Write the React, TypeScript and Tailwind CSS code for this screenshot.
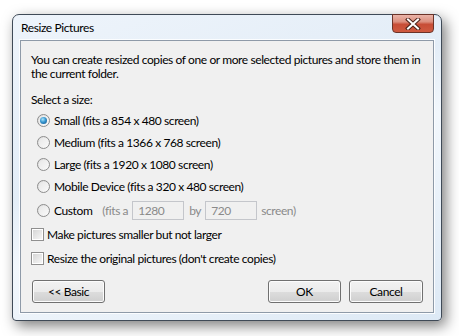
import React from "react";

const font = { fontFamily: 'Lato, "Liberation Sans", sans-serif', letterSpacing: "-0.4px" };

function Radio({ checked }: { checked?: boolean }) {
  return (
    <span className="relative w-[13px] h-[13px] rounded-full border border-[#8d8d8d] bg-gradient-to-br from-[#dcdcdc] to-[#fdfdfd] flex items-center justify-center shrink-0">
      <span className="w-[9px] h-[9px] rounded-full bg-gradient-to-br from-[#e8e8e8] to-[#f8f8f8] flex items-center justify-center">
        {checked && (
          <span className="w-[7px] h-[7px] rounded-full bg-[radial-gradient(circle_at_40%_35%,#a9e4fb_0%,#3796cf_45%,#0d4e86_100%)]" />
        )}
      </span>
    </span>
  );
}

function Check() {
  return (
    <span className="w-[13px] h-[13px] border border-[#8f8f8f] bg-white flex items-center justify-center shrink-0">
      <span className="w-[9px] h-[9px] bg-gradient-to-br from-[#d6d6d6] to-[#f6f6f6]" />
    </span>
  );
}

function Button({ children, className }: { children: React.ReactNode; className?: string }) {
  return (
    <div
      className={`h-[23px] rounded-[3px] border border-[#707070] bg-[linear-gradient(#f2f2f2_0%,#ebebeb_50%,#dddddd_50%,#cfcfcf_100%)] shadow-[inset_0_0_0_1px_#fcfcfc] flex items-center justify-center text-[12px] text-black ${className ?? ""}`}
    >
      {children}
    </div>
  );
}

function Field({ value }: { value: string }) {
  return (
    <span className="w-[52px] h-[19px] border border-[#c4c6cb] bg-[#f0f0f0] text-[#8a8a8a] flex items-center pl-[5px]">
      {value}
    </span>
  );
}

export default function App() {
  return (
    <div className="w-[459px] h-[336px] bg-white pt-[14px] pl-[12px]" style={font}>
      <div className="relative w-[430px] h-[307px] rounded-t-[7px] rounded-b-[4px] border border-[#3f4a57] bg-[linear-gradient(160deg,#eef4fb_0%,#e3edf7_40%,#f2f7fc_55%,#dde9f5_100%)] shadow-[4px_5px_14px_rgba(0,0,0,0.5)] flex flex-col">
        <div className="h-[25px] flex items-center pl-[8px] text-[12px] text-black">
          Resize Pictures
        </div>
        <div className="absolute right-[7px] top-[-1px] w-[42px] h-[19px] rounded-b-[4px] border border-[#6b3328] bg-[linear-gradient(#eab4a8_0%,#dc8f7e_40%,#c74d36_55%,#cf5a40_100%)] flex items-center justify-center">
          <svg width="16" height="12" viewBox="0 0 16 12">
            <path d="M3 1.5 L13 10.5 M13 1.5 L3 10.5" stroke="#4a2219" strokeWidth="4" strokeLinecap="square" />
            <path d="M3 1.5 L13 10.5 M13 1.5 L3 10.5" stroke="#ffffff" strokeWidth="2" strokeLinecap="square" />
          </svg>
        </div>
        <div className="mx-[7px] mb-[7px] flex-1 border border-[#8e9aa8] shadow-[0_0_0_1px_#fbfdff] bg-[#f0f0f0] flex flex-col pl-[10px] pr-[6px] text-[12px] text-black">
          <p className="mt-[12px] leading-[14px] whitespace-nowrap">
            You can create resized copies of one or more selected pictures and store them in
            <br />
            the current folder.
          </p>
          <p className="mt-[11px] leading-[15px]">Select a size:</p>
          <div className="flex flex-col pl-[6px] mt-[6px] gap-[7px]">
            <div className="flex items-center gap-[4px] h-[15px]">
              <Radio checked />
              <span>Small (fits a 854 x 480 screen)</span>
            </div>
            <div className="flex items-center gap-[4px] h-[15px]">
              <Radio />
              <span>Medium (fits a 1366 x 768 screen)</span>
            </div>
            <div className="flex items-center gap-[4px] h-[15px]">
              <Radio />
              <span>Large (fits a 1920 x 1080 screen)</span>
            </div>
            <div className="flex items-center gap-[4px] h-[15px]">
              <Radio />
              <span>Mobile Device (fits a 320 x 480 screen)</span>
            </div>
            <div className="flex items-center gap-[4px] h-[19px]">
              <Radio />
              <span>Custom</span>
              <span className="ml-[6px] text-[#8a8a8a]">(fits a</span>
              <Field value="1280" />
              <span className="ml-[1px] text-[#8a8a8a]">by</span>
              <Field value="720" />
              <span className="text-[#8a8a8a]">screen)</span>
            </div>
          </div>
          <div className="flex flex-col gap-[9px] mt-[7px]">
            <div className="flex items-center gap-[3px] h-[15px]">
              <Check />
              <span>Make pictures smaller but not larger</span>
            </div>
            <div className="flex items-center gap-[3px] h-[15px]">
              <Check />
              <span>Resize the original pictures (don't create copies)</span>
            </div>
          </div>
          <div className="flex items-center mt-[14px] pr-[4px]">
            <Button className="w-[73px] ml-[1px]">&lt;&lt; Basic</Button>
            <div className="flex-1" />
            <Button className="w-[73px]">OK</Button>
            <Button className="w-[74px] ml-[8px]">Cancel</Button>
          </div>
        </div>
      </div>
    </div>
  );
}
